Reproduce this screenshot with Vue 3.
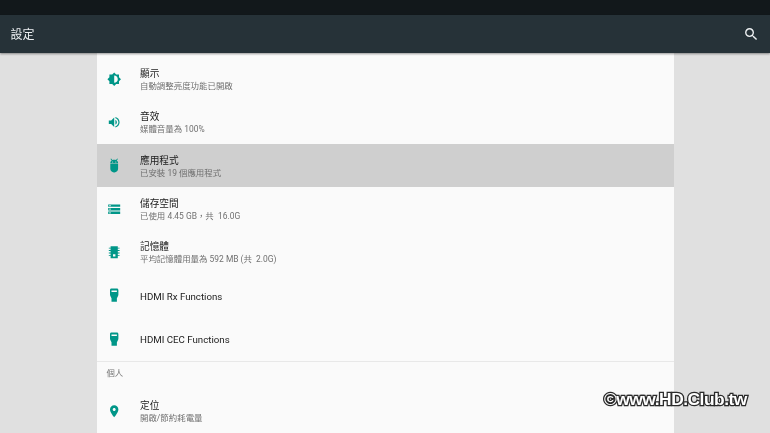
<script setup>
const paths = {
  display: 'M20 15.31L23.31 12 20 8.69V4h-4.69L12 .69 8.69 4H4v4.69L.69 12 4 15.31V20h4.69L12 23.31 15.31 20H20v-4.69zM12 18V6c3.31 0 6 2.69 6 6s-2.69 6-6 6z',
  sound: 'M3 9v6h4l5 5V4L7 9H3zm13.5 3c0-1.77-1.02-3.29-2.5-4.03v8.05c1.48-.73 2.5-2.25 2.5-4.02zM14 3.23v2.06c2.89.86 5 3.54 5 6.71s-2.11 5.85-5 6.71v2.06c4.01-.91 7-4.49 7-8.77s-2.99-7.86-7-8.77z',
  apps: 'M6.800.8l2.200 2.700C9.800 3.100 10.800 3 12 3s2.200.1 3 .5l2.200-2.700 1 .8-2 2.500C17.600 5 18.500 6.500 18.500 8.200v.8h-13v-.8C5.500 6.500 6.400 5 7.800 4.100l-2-2.500zM9.300 5.700a1 1 0 100 2 1 1 0 000-2zm5.400 0a1 1 0 100 2 1 1 0 000-2zM5.500 10h13v8c0 3.300-2.700 6-6 6h-1c-3.300 0-6-2.700-6-6z',
  storage: 'M2 20h20v-4H2v4zm2-3h2v2H4v-2zM2 4v4h20V4H2zm4 3H4V5h2v2zm-4 7h20v-4H2v4zm2-3h2v2H4v-2z',
  memory: 'M6 2h12v2.500h3V6h-3v2.500h3V10h-3v2.500h3V14h-3v2.500h3V18h-3v4H6v-4H3v-1.500h3V14H3v-1.500h3V10H3V8.500h3V6H3V4.500h3zm4 13.500V19h4v-3.500z',
  hdmi: 'M7.500 1h9C18 1 19 2 19 3.500V11c0 1.200-.4 2.300-1 3.200L16.500 17v6h-9v-6L6 14.200C5.400 13.300 5 12.200 5 11V3.500C5 2 6 1 7.500 1zM7.500 4v2.500h9V4z',
  place: 'M12 2C8.130 2 5 5.130 5 9c0 5.250 7 13 7 13s7-7.750 7-13c0-3.870-3.130-7-7-7zm0 9.500c-1.380 0-2.500-1.120-2.500-2.500s1.120-2.500 2.500-2.500 2.500 1.120 2.500 2.500-1.120 2.500-2.500 2.500z',
}

const device = [
  { icon: 'display', title: '顯示', summary: '自動調整亮度功能已開啟' },
  { icon: 'sound', title: '音效', summary: '媒體音量為 100%' },
  { icon: 'apps', title: '應用程式', summary: '已安裝 19 個應用程式', active: true },
  { icon: 'storage', title: '儲存空間', summary: '已使用 4.45 GB，共  16.0G' },
  { icon: 'memory', title: '記憶體', summary: '平均記憶體用量為 592 MB (共  2.0G)' },
  { icon: 'hdmi', title: 'HDMI Rx Functions' },
  { icon: 'hdmi', title: 'HDMI CEC Functions' },
]
const personal = [
  { icon: 'place', title: '定位', summary: '開啟/節約耗電量' },
]
</script>

<template>
  <div class="page">
    <div class="status"></div>
    <header class="toolbar">
      <span class="heading">設定</span>
      <svg class="search" viewBox="0 0 24 24"><path d="M15.500 14h-.79l-.28-.27A6.470 6.470 0 0016 9.500 6.500 6.500 0 109.500 16c1.610 0 3.090-.59 4.230-1.570l.27.28v.79l5 4.990L20.490 19l-4.990-5zm-6 0C7.010 14 5 11.990 5 9.500S7.010 5 9.500 5 14 7.010 14 9.500 11.990 14 9.500 14z"/></svg>
    </header>
    <main class="panel">
      <section class="group">
        <div v-for="item in device" :key="item.title" class="row" :class="{ active: item.active }">
          <svg class="icon" viewBox="0 0 24 24"><path :d="paths[item.icon]" fill-rule="evenodd"/></svg>
          <div class="text">
            <div class="title">{{ item.title }}</div>
            <div v-if="item.summary" class="summary">{{ item.summary }}</div>
          </div>
        </div>
      </section>
      <div class="label">個人</div>
      <section>
        <div v-for="item in personal" :key="item.title" class="row">
          <svg class="icon" viewBox="0 0 24 24"><path :d="paths[item.icon]" fill-rule="evenodd"/></svg>
          <div class="text">
            <div class="title">{{ item.title }}</div>
            <div class="summary">{{ item.summary }}</div>
          </div>
        </div>
      </section>
    </main>
    <div class="watermark">©www.HD.Club.tw</div>
  </div>
</template>

<style scoped>
.page {
  position: relative;
  width: 770px;
  height: 433px;
  overflow: hidden;
  background: #e0e0e0;
  font-family: Roboto, "Noto Sans CJK TC", sans-serif;
}
.status {
  height: 14.500px;
  background: #12181b;
}
.toolbar {
  position: relative;
  z-index: 1;
  height: 38.500px;
  padding: 0 10.500px;
  display: flex;
  align-items: center;
  justify-content: space-between;
  background: #263238;
  box-shadow: 0 1px 2px rgba(0, 0, 0, 0.4);
}
.heading {
  color: #eceff1;
  font-size: 12px;
  filter: blur(0.3px);
}
.search {
  width: 16.500px;
  height: 16.500px;
  fill: #eceff1;
  filter: blur(0.3px);
}
.panel {
  width: 577px;
  margin-left: 97px;
  padding-top: 4.300px;
  height: 380px;
  background: #fafafa;
}
.group {
  height: 303.300px;
  border-bottom: 1px solid #e8e8e8;
}
.row {
  height: 43.330px;
  display: flex;
  align-items: center;
  padding-left: 9.500px;
}
.row.active {
  background: #cfcfcf;
}
.icon {
  width: 14.400px;
  height: 14.400px;
  flex: none;
  fill: #009688;
  filter: blur(0.3px);
}
.text {
  margin-left: 19.100px;
  padding-top: 1px;
  filter: blur(0.25px);
}
.title {
  font-size: 9.700px;
  line-height: 13px;
  color: #1c1c1c;
}
.summary {
  margin-top: 1px;
  font-size: 8.450px;
  line-height: 11px;
  color: #707070;
  white-space: pre;
}
.label {
  height: 28px;
  line-height: 23px;
  padding-left: 9.500px;
  font-size: 8.400px;
  color: #757575;
  filter: blur(0.3px);
}
.watermark {
  position: absolute;
  left: 604px;
  top: 389px;
  font-family: "Liberation Sans", sans-serif;
  font-size: 17.400px;
  line-height: 21px;
  font-weight: 700;
  letter-spacing: -0.500px;
  white-space: nowrap;
  color: #fff;
  -webkit-text-stroke: 2.600px #2a2a2a;
  paint-order: stroke fill;
  filter: blur(0.3px);
}
</style>
